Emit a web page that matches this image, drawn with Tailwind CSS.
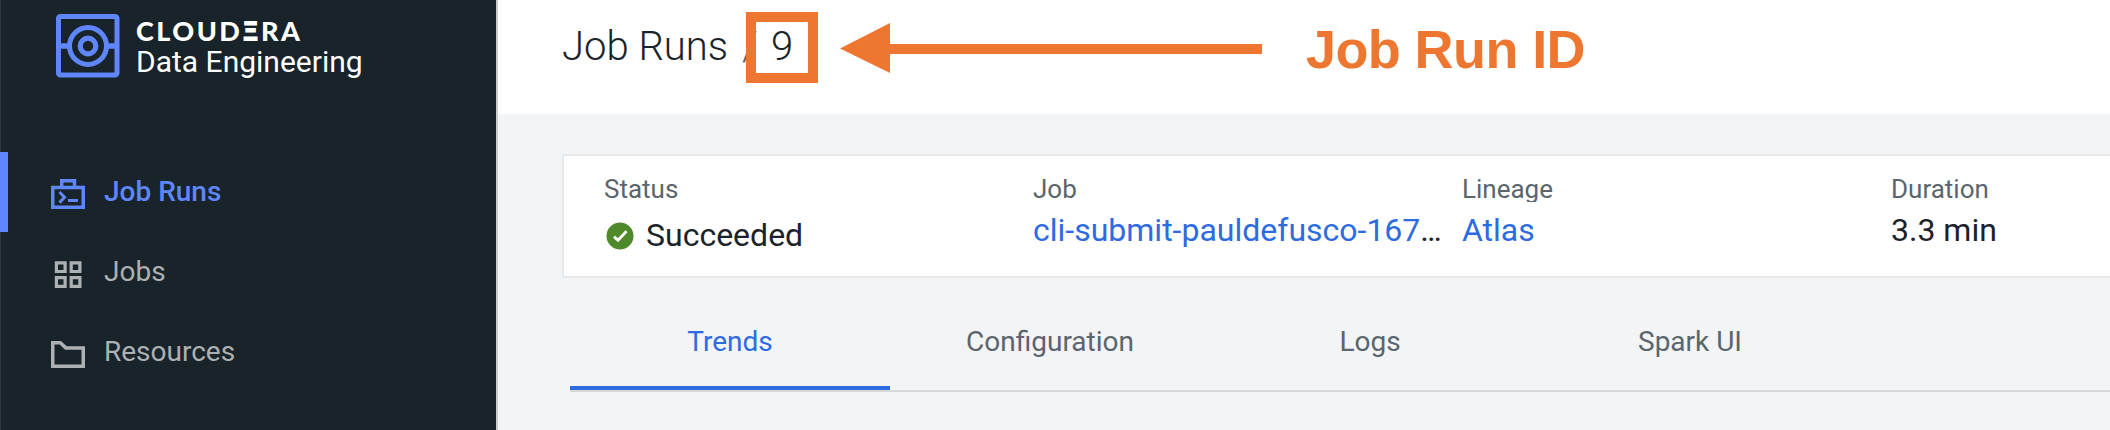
<!DOCTYPE html>
<html lang="en">
<head>
<meta charset="utf-8">
<title>Job Runs / 9</title>
<script src="https://cdn.jsdelivr.net/npm/@tailwindcss/browser@4"></script>
</head>
<body class="h-[430px] w-[2110px] overflow-hidden font-['Roboto',sans-serif]">
<div class="relative flex h-full">
  <aside class="flex w-[498px] shrink-0 flex-col border-r-2 border-l border-r-[#cacccd] border-l-[#2d383d] bg-[#18242a]">
    <div class="flex h-[152px] items-start gap-[16px] pt-[14px] pl-[55px]">
      <svg class="size-[64px] shrink-0" viewBox="0 0 64 64" fill="none" stroke="#5f86fb">
        <rect x="2.5" y="2.5" width="58.5" height="58.5" rx="2" stroke-width="5"/>
        <circle cx="32" cy="32" r="18.5" stroke-width="5"/>
        <circle cx="32" cy="32" r="7.8" stroke-width="5.2"/>
        <path d="M3 32H13.500M50.500 32H61" stroke-width="5.500"/>
      </svg>
      <div class="flex flex-col whitespace-nowrap text-white">
        <div class="mt-[2px] h-[29px] font-['Lato',sans-serif] text-[27px] leading-[28px] font-black tracking-[2.5px]">CLOUD<span class="font-['Open_Sans',sans-serif] text-[28px] font-extrabold tracking-[2.5px]">Ξ</span>RA</div>
        <div class="h-[34px] text-[30px] leading-[34px]">Data Engineering</div>
      </div>
    </div>
    <nav class="-ml-px flex flex-col text-[28px] leading-[32px] text-[#adb1b4]">
      <a class="flex h-[80px] items-center gap-[19px] border-l-8 border-[#5f86fb] pl-[43px] font-medium text-[#5f86fb]">
        <svg class="h-[34px] w-[34px]" viewBox="0 0 34 34" fill="none" stroke="currentColor" stroke-width="3.500">
          <path d="M1.750 12.500H32.250V32.250H1.750ZM10.700 12V5.700H23.500V12"/>
          <path d="M8.500 17L13.500 22.300L8.500 27.600M17 25.500H27" stroke-width="3"/>
        </svg>
        <span>Job Runs</span>
      </a>
      <a class="flex h-[80px] items-center gap-[19px] pl-[51px]">
        <svg class="h-[34px] w-[34px]" viewBox="0 0 34 34" fill="none" stroke="currentColor" stroke-width="3.200">
          <path d="M5.400 7.800h8.700v8.700h-8.700zM20.200 7.800h8.700v8.700h-8.700zM5.400 22.700h8.700v8.700h-8.700zM20.200 22.700h8.700v8.700h-8.700z"/>
        </svg>
        <span>Jobs</span>
      </a>
      <a class="flex h-[80px] items-center gap-[19px] pl-[51px]">
        <svg class="h-[34px] w-[34px]" viewBox="0 0 34 34" fill="none" stroke="currentColor" stroke-width="3.500">
          <path d="M1.750 7.750H9.300L14.800 12.900H32.250V31.250H1.750Z"/>
        </svg>
        <span>Resources</span>
      </a>
    </nav>
  </aside>

  <main class="flex min-w-0 grow flex-col bg-[#f3f4f6]">
    <header class="flex h-[114px] items-start bg-white pl-[64px] text-[40px] leading-[48px] font-light text-[#1b2329]">
      <div class="mt-[23px] flex whitespace-pre"><span class="w-[180px]">Job Runs</span><span class="w-[29px] text-[#5a656d]">/</span><span>9</span></div>
    </header>

    <section class="mt-[40px] ml-[64px] flex h-[124px] shrink-0 border-2 border-r-0 border-[#e7e8ea] bg-white pt-[20px] pl-[40px] text-[32px] leading-[38px] text-[#1b2329]">
      <div class="w-[429px] shrink-0 pr-[16px]">
        <div class="h-[26px] text-[26px] leading-[26px] text-[#5a656d]">Status</div>
        <div class="mt-[14px] flex items-center gap-[12px]">
          <svg class="mt-[2px] ml-[2px] size-[28px]" viewBox="0 0 28 28">
            <circle cx="14" cy="14" r="13.500" fill="#4f8a2a"/>
            <path d="M8 14.600L12 18.300L20.500 9.200" fill="none" stroke="#fff" stroke-width="2.800"/>
          </svg>
          <span>Succeeded</span>
        </div>
      </div>
      <div class="w-[429px] shrink-0 pr-[14px]">
        <div class="h-[26px] text-[26px] leading-[26px] text-[#5a656d]">Job</div>
        <div class="mt-[9px] whitespace-nowrap"><a class="text-[#2d6be0]">cli-submit-pauldefusco-167</a>…</div>
      </div>
      <div class="w-[429px] shrink-0 pr-[16px]">
        <div class="h-[26px] overflow-hidden text-[26px] leading-[26px] text-[#5a656d]">Lineage</div>
        <div class="mt-[9px]"><a class="text-[#2d6be0]">Atlas</a></div>
      </div>
      <div class="min-w-0 grow">
        <div class="h-[26px] text-[26px] leading-[26px] text-[#5a656d]">Duration</div>
        <div class="mt-[9px]">3.3 min</div>
      </div>
    </section>

    <div class="mt-[12px] ml-[72px] flex h-[102px] shrink-0 border-b-2 border-[#d5d7d9] text-center text-[28px] leading-[32px] text-[#5a656d]">
      <a class="w-[320px] border-b-4 border-[#2d6be0] pt-[36px] text-[#2d6be0]">Trends</a>
      <a class="w-[320px] pt-[36px]">Configuration</a>
      <a class="w-[320px] pt-[36px]">Logs</a>
      <a class="w-[320px] pt-[36px]">Spark UI</a>
    </div>
  </main>

  <!-- Callout drawn over the header -->
  <div class="absolute top-[12px] left-[746px] h-[71px] w-[72px] border-[10px] border-[#ed7730]"></div>
  <svg class="absolute top-[22px] left-[840px] h-[54px] w-[422px]" viewBox="0 0 422 54" fill="#ed7730">
    <path d="M0 26.500L50 1V22H422V32H50V51Z"/>
  </svg>
  <div class="absolute top-[18px] left-[1306px] font-['Liberation_Sans',sans-serif] text-[54px] leading-[62px] font-bold tracking-[-0.6px] whitespace-nowrap text-[#ed7730]">Job Run ID</div>
</div>
</body>
</html>
